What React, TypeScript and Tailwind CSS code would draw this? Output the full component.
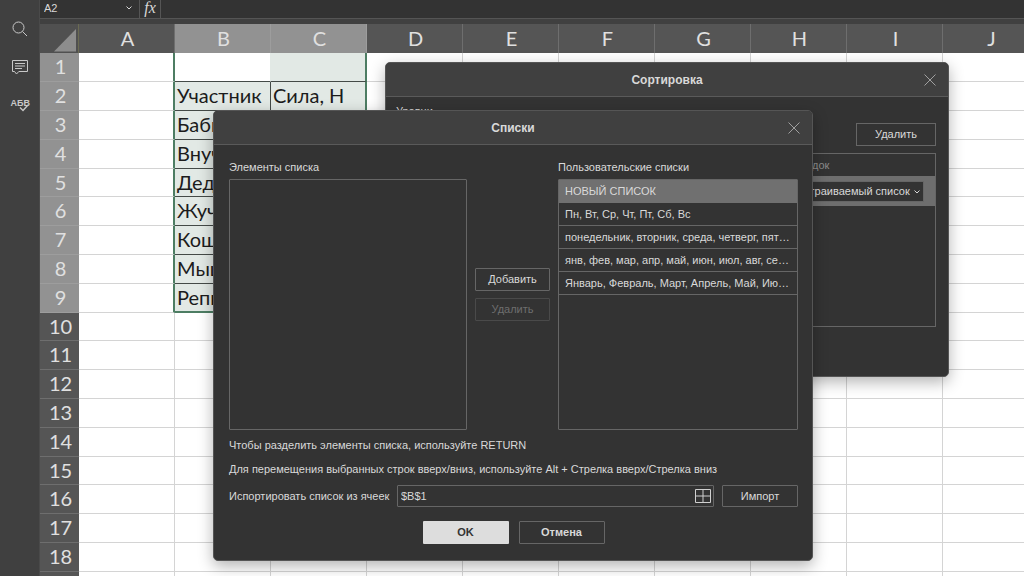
import { useState } from "react";
import type { ReactNode } from "react";

const columns = ["A", "B", "C", "D", "E", "F", "G", "H", "I", "J"];
const rows = Array.from({ length: 19 }, (_, i) => i + 1);

const cells: Record<string, string> = {
  B2: "Участник",
  C2: "Сила, Н",
  B3: "Бабка",
  B4: "Внучка",
  B5: "Дедка",
  B6: "Жучка",
  B7: "Кошка",
  B8: "Мышка",
  B9: "Репка"
};

const customLists = [
  "НОВЫЙ СПИСОК",
  "Пн, Вт, Ср, Чт, Пт, Сб, Вс",
  "понедельник, вторник, среда, четверг, пятница, суббота, воскресенье",
  "янв, фев, мар, апр, май, июн, июл, авг, сен, окт, ноя, дек",
  "Январь, Февраль, Март, Апрель, Май, Июнь, Июль, Август, Сентябрь"
];

function cellClass(col: string, row: number) {
  const inRange = (col === "B" || col === "C") && row <= 9;
  if (!inRange) {
    const beforeRange = col === "A" && row <= 9;
    return `border-b border-[#d4d4d4] ${
      beforeRange ? "border-r-2 border-r-[#4d7d63]" : "border-r"
    }`;
  }

  const bg = col === "B" && row === 1 ? "bg-white" : "bg-[#e2e9e5]";
  const bottom = row === 9 ? "border-b-2 border-b-[#4d7d63]" : "border-b border-b-[#444a47]";
  const right =
    col === "C"
      ? "border-r-2 border-r-[#4d7d63]"
      : row === 1
        ? "border-r border-r-[#e2e9e5]"
        : "border-r border-r-[#444a47]";
  return `${bg} ${bottom} ${right}`;
}

function Chevron({ className }: { className?: string }) {
  return (
    <svg viewBox="0 0 8 8" className={`size-2 ${className ?? ""}`} fill="none" stroke="currentColor">
      <path d="M1.5 2.5 4 5l2.5-2.5" />
    </svg>
  );
}

function Sidebar() {
  return (
    <aside className="flex w-10 shrink-0 flex-col items-center gap-5 border-r border-[#4a4a4a] bg-[#404040] pt-5 text-[#c8c8c8]">
      <button type="button" aria-label="Поиск">
        <svg viewBox="0 0 18 18" className="size-[18px]" fill="none" stroke="currentColor">
          <circle cx="7.5" cy="7.5" r="5.5" />
          <path d="m11.5 11.5 4.5 4.5" />
        </svg>
      </button>
      <button type="button" aria-label="Комментарии">
        <svg viewBox="0 0 18 18" className="size-[18px]" fill="none" stroke="currentColor">
          <path d="M1.5 2.5h15v11H7.8L5.5 16l-2-2.5h-2zM4 5.5h10M4 8h10M4 10.5h7" />
        </svg>
      </button>
      <button type="button" aria-label="Проверка орфографии" className="relative h-[18px] w-[18px]">
        <span className="absolute top-0.5 left-0 font-['Liberation_Sans_Narrow','Liberation_Sans',sans-serif] text-[9px] leading-[10px] font-bold">
          АБВ
        </span>
        <svg viewBox="0 0 18 18" className="absolute inset-0" fill="none" stroke="currentColor" strokeWidth="1.4">
          <path d="m9 11.5 3 3 5-5.5" />
        </svg>
      </button>
    </aside>
  );
}

function FormulaBar() {
  return (
    <div className="flex h-[19px] border-b border-[#555] bg-[#333] text-[#d8d8d8]">
      <label className="flex w-[100px] items-center border-r border-[#555] pr-1.5 pb-0.5">
        <input
          aria-label="Имя ячейки"
          defaultValue="A2"
          className="min-w-0 flex-1 bg-transparent pl-1 text-[11px] leading-4 outline-none"
        />
        <Chevron />
      </label>
      <button
        type="button"
        aria-label="Вставить функцию"
        className="w-[21px] border-r border-[#555] pb-0.5 font-['Liberation_Serif',serif] text-base leading-4 italic"
      >
        fx
      </button>
      <input aria-label="Формула" className="min-w-0 flex-1 bg-transparent outline-none" />
    </div>
  );
}

function Sheet() {
  return (
    <table className="w-max table-fixed border-separate border-spacing-0 bg-white font-['Lato','Noto_Sans',sans-serif] text-xl">
      <thead>
        <tr className="h-[29px]">
          <th className="w-[39px] border-r border-[#6a6a52] bg-[#505050] p-0">
            <svg viewBox="0 0 38 28" className="block h-7 w-[38px]">
              <path d="M14 26.5h22V4z" fill="#8d8d8d" />
            </svg>
          </th>
          {columns.map((col) => (
            <th
              key={col}
              className={`w-24 border-r p-0 pb-0.5 pl-0.5 leading-6 font-normal text-[#e0e0e0] ${
                col === "B" || col === "C"
                  ? "border-[#9d9d9d] bg-[#929292]"
                  : "border-[#6e6e6e] bg-[#555]"
              }`}
            >
              {col}
            </th>
          ))}
        </tr>
      </thead>
      <tbody>
        {rows.map((row) => (
          <tr key={row} className={row % 5 === 0 ? "h-7" : "h-[29px]"}>
            <th
              className={`border-b p-0 pb-0.5 pl-0.5 leading-6 font-normal text-[#e0e0e0] ${
                row <= 9 ? "border-[#9d9d9d] bg-[#929292]" : "border-[#6e6e6e] bg-[#555]"
              }`}
            >
              {row}
            </th>
            {columns.map((col) => (
              <td
                key={col}
                className={`overflow-hidden p-0 pb-0.5 pl-0.5 leading-6 whitespace-nowrap text-[#1c1c1c] ${cellClass(col, row)}`}
              >
                {cells[`${col}${row}`]}
              </td>
            ))}
          </tr>
        ))}
      </tbody>
    </table>
  );
}

type DialogProps = { title: string; className: string; children: ReactNode };

function Dialog({ title, className, children }: DialogProps) {
  return (
    <section
      role="dialog"
      aria-label={title}
      className={`absolute overflow-hidden rounded-[5px] border border-[#555] bg-[#333] shadow-[0_5px_15px_rgba(0,0,0,0.3)] ${className}`}
    >
      <header className="relative border-b border-[#5a5a5a] bg-[#404040] text-center">
        <h2 className="pt-px text-xs leading-8 font-bold">{title}</h2>
        <button type="button" aria-label="Закрыть" className="absolute top-[11px] right-3 text-[#a0a0a0]">
          <svg viewBox="0 0 12 12" className="size-3" fill="none" stroke="currentColor">
            <path d="m.5.5 11 11m0-11-11 11" />
          </svg>
        </button>
      </header>
      {children}
    </section>
  );
}

function SortDialog() {
  return (
    <Dialog title="Сортировка" className="top-[62px] left-[385px] h-[315px] w-[564px]">
      <div className="px-3 pt-1.5 pl-2.5">
        <p className="leading-4">Уровни</p>
        <div className="mt-1 flex justify-end">
          <button type="button" className="h-[23px] w-20 border border-[#666]">
            Удалить
          </button>
        </div>
        <div className="mt-[7px] h-[174px] border border-[#666]">
          <div className="flex justify-end pr-3">
            <span className="w-[137px] leading-[22px] text-[#8c8c8c]">Порядок</span>
          </div>
          <div className="flex h-[30px] items-center justify-end bg-[#6e6e6e] pr-[11px]">
            <label className="relative">
              <select
                aria-label="Порядок"
                className="h-[21px] w-[142px] appearance-none border border-[#666] bg-[#333] pl-[7px] outline-none"
              >
                <option>Настраиваемый список</option>
              </select>
              <Chevron className="absolute top-[7px] right-[3px]" />
            </label>
          </div>
        </div>
      </div>
    </Dialog>
  );
}

function ListsDialog() {
  const [selected, setSelected] = useState(0);

  return (
    <Dialog title="Списки" className="top-[110px] left-[213px] w-[600px]">
      <div className="pt-3.5 pr-3.5 pb-4 pl-[15px]">
        <div className="flex">
          <div className="w-[238px]">
            <label htmlFor="items" className="block leading-4">
              Элементы списка
            </label>
            <textarea
              id="items"
              className="mt-1 block h-[251px] w-full resize-none rounded-[1px] border border-[#666] bg-transparent p-1.5 outline-none"
            />
          </div>
          <div className="flex flex-1 flex-col gap-[7px] px-2 pt-[109px]">
            <button type="button" className="h-[23px] rounded-[1px] border border-[#666]">
              Добавить
            </button>
            <button type="button" disabled className="h-[23px] rounded-[1px] border border-[#4a4a4a] text-[#6e6e6e]">
              Удалить
            </button>
          </div>
          <div className="w-60">
            <p id="custom-lists" className="leading-4">
              Пользовательские списки
            </p>
            <ul
              role="listbox"
              aria-labelledby="custom-lists"
              className="mt-1 h-[251px] rounded-[1px] border border-[#666]"
            >
              {customLists.map((list, i) => (
                <li
                  key={list}
                  role="option"
                  aria-selected={selected === i}
                  onClick={() => setSelected(i)}
                  className={`truncate border-b px-1.5 ${
                    selected === i
                      ? "border-[#707070] bg-[#707070] leading-[22px]"
                      : "border-[#666] leading-[22px]"
                  }`}
                >
                  {list}
                </li>
              ))}
            </ul>
          </div>
        </div>
        <p className="mt-[7px] leading-4">Чтобы разделить элементы списка, используйте RETURN</p>
        <p className="mt-2 leading-4">
          Для перемещения выбранных строк вверх/вниз, используйте Alt + Стрелка вверх/Стрелка вниз
        </p>
        <div className="mt-2 flex items-center">
          <label htmlFor="range" className="w-[168px]">
            Испортировать список из ячеек
          </label>
          <div className="flex h-[22px] flex-1 items-center rounded-[1px] border border-[#666] pr-0.5">
            <input
              id="range"
              defaultValue="$B$1"
              className="min-w-0 flex-1 bg-transparent pl-[3px] outline-none"
            />
            <button type="button" aria-label="Выбор данных">
              <svg viewBox="0 0 16 14" className="h-3.5 w-4" fill="none" stroke="#d0d0d0">
                <path d="M.5.5h15v13H.5zM8 .5v13M.5 7h15" />
              </svg>
            </button>
          </div>
          <button type="button" className="ml-2 h-[22px] w-[76px] rounded-[1px] border border-[#666]">
            Импорт
          </button>
        </div>
        <div className="mt-3.5 flex justify-center gap-2.5 font-bold">
          <button type="button" className="h-[23px] w-[86px] rounded-[1px] bg-[#ddd] text-[#333]">
            OK
          </button>
          <button type="button" className="h-[23px] w-[86px] rounded-[1px] border border-[#666]">
            Отмена
          </button>
        </div>
      </div>
    </Dialog>
  );
}

export default function App() {
  return (
    <div className="relative flex h-screen overflow-hidden bg-[#404040] font-['Liberation_Sans',Arial,sans-serif] text-[11px] text-[#d9d9d9]">
      <Sidebar />
      <main className="min-w-0 flex-1 overflow-hidden">
        <FormulaBar />
        <div className="pt-[5px]">
          <Sheet />
        </div>
      </main>
      <SortDialog />
      <ListsDialog />
    </div>
  );
}
